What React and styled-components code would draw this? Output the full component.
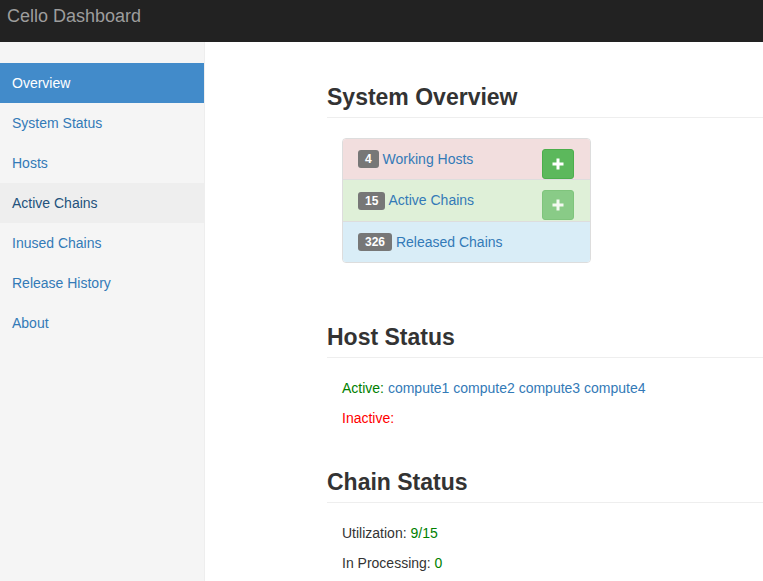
import React from 'react';
import styled, {createGlobalStyle} from 'styled-components';

const GlobalStyle = createGlobalStyle`
    html, body {
        margin: 0;
        padding: 0;
    }
    body {
        font-family: "Liberation Sans", Arial, sans-serif;
        font-size: 14px;
        line-height: 20px;
        color: #333;
        background: #fff;
    }
    * {
        box-sizing: border-box;
    }
`;

const menu = ['Overview', 'System Status', 'Hosts', 'Active Chains', 'Inused Chains', 'Release History', 'About'];

const stats = [
    {count: 4, label: 'Working Hosts', tone: 'danger', button: 'on'},
    {count: 15, label: 'Active Chains', tone: 'success', button: 'off'},
    {count: 326, label: 'Released Chains', tone: 'info'},
];

const hosts = ['compute1', 'compute2', 'compute3', 'compute4'];

const PlusIcon = () => (
    <svg width="12" height="12" viewBox="0 0 12 12">
        <rect x="4.5" y="0.5" width="3" height="11" fill="#fff" />
        <rect x="0.5" y="4.5" width="11" height="3" fill="#fff" />
    </svg>
)

const StatItem = ({count, label, tone, button}) => (
    <Item tone={tone}>
        {button && (
            <AddButton disabled={button === 'off'}>
                <PlusIcon />
            </AddButton>
        )}
        <Badge>{count}</Badge> <Link href="#">{label}</Link>
    </Item>
)

function App() {
    return(
        <>
            <GlobalStyle />
            <Page>
                <Navbar>
                    <Brand>Cello Dashboard</Brand>
                </Navbar>
                <Body>
                    <Sidebar>
                        {menu.map((name, i) => (
                            <NavItem key={name} active={i === 0} hovered={name === 'Active Chains'}>
                                {name}
                            </NavItem>
                        ))}
                    </Sidebar>
                    <Main>
                        <Header>System Overview</Header>
                        <ListGroup>
                            {stats.map(s => <StatItem key={s.label} {...s} />)}
                        </ListGroup>

                        <Header>Host Status</Header>
                        <Lines>
                            <Line>
                                <Tag color='green'>Active:</Tag>{' '}
                                {hosts.map((h, i) => (
                                    <React.Fragment key={h}>
                                        <Link href="#">{h}</Link>{i < hosts.length - 1 ? ' ' : ''}
                                    </React.Fragment>
                                ))}
                            </Line>
                            <Line>
                                <Tag color='red'>Inactive:</Tag>
                            </Line>
                        </Lines>

                        <Header>Chain Status</Header>
                        <Lines>
                            <Line>Utilization: <Tag color='green'>9/15</Tag></Line>
                            <Line>In Processing: <Tag color='green'>0</Tag></Line>
                        </Lines>
                    </Main>
                </Body>
            </Page>
        </>
    )
}

const Page = styled.div`
    display: flex;
    flex-direction: column;
    min-height: 100vh;
`;

const Navbar = styled.div`
    height: 42px;
    background-color: #222;
    flex-shrink: 0;
`;

const Brand = styled.div`
    padding: 6px 7px;
    font-size: 18px;
    line-height: 20px;
    color: #9d9d9d;
`;

const Body = styled.div`
    display: flex;
    flex: 1;
`;

const Sidebar = styled.nav`
    width: 205px;
    flex-shrink: 0;
    padding-top: 21px;
    background-color: #f5f5f5;
    border-right: 1px solid #eee;
    display: flex;
    flex-direction: column;
`;

const NavItem = styled.a`
    display: block;
    padding: 10px 12px;
    line-height: 20px;
    text-decoration: none;
    cursor: pointer;
    color: ${({active, hovered}) => active ? '#fff' : hovered ? '#23527c' : '#337ab7'};
    background-color: ${({active, hovered}) => active ? '#428bca' : hovered ? '#eee' : 'transparent'};
`;

const Main = styled.main`
    flex: 1;
    display: flex;
    flex-direction: column;
    padding: 1px 0 0 122px;
    min-width: 0;
`;

const Header = styled.h1`
    margin: 42px 0 20px;
    padding-bottom: 7px;
    font-size: 23px;
    line-height: 25px;
    font-weight: bold;
    color: #333;
    border-bottom: 1px solid #eee;
    white-space: nowrap;
`;

const ListGroup = styled.div`
    width: 249px;
    margin: 0 0 20px 15px;
    border: 1px solid #ddd;
    border-radius: 4px;
    overflow: hidden;
`;

const tones = {
    danger: '#f2dede',
    success: '#dff0d8',
    info: '#d9edf7',
};

const Item = styled.div`
    padding: 10px 15px;
    line-height: 20px;
    background-color: ${({tone}) => tones[tone]};

    & + & {
        border-top: 1px solid #ddd;
    }
`;

const Badge = styled.span`
    display: inline-block;
    min-width: 10px;
    padding: 3px 7px;
    font-size: 12px;
    font-weight: bold;
    line-height: 12px;
    color: #fff;
    text-align: center;
    vertical-align: middle;
    background-color: #777;
    border-radius: 3px;
    position: relative;
    top: -1px;
`;

const Link = styled.a`
    color: #337ab7;
    text-decoration: none;
`;

const AddButton = styled.button`
    float: right;
    display: flex;
    align-items: center;
    justify-content: center;
    width: 32px;
    height: 30px;
    margin-right: 1px;
    padding: 0;
    background-color: #5cb85c;
    border: 1px solid #4cae4c;
    border-radius: 3px;
    opacity: ${({disabled}) => disabled ? 0.65 : 1};
    cursor: ${({disabled}) => disabled ? 'not-allowed' : 'pointer'};
`;

const Lines = styled.div`
    display: flex;
    flex-direction: column;
    gap: 10px;
    padding-left: 15px;
`;

const Line = styled.p`
    margin: 0;
    line-height: 20px;
    white-space: nowrap;
`;

const Tag = styled.span`
    color: ${({color}) => color};
`;

export default App;
